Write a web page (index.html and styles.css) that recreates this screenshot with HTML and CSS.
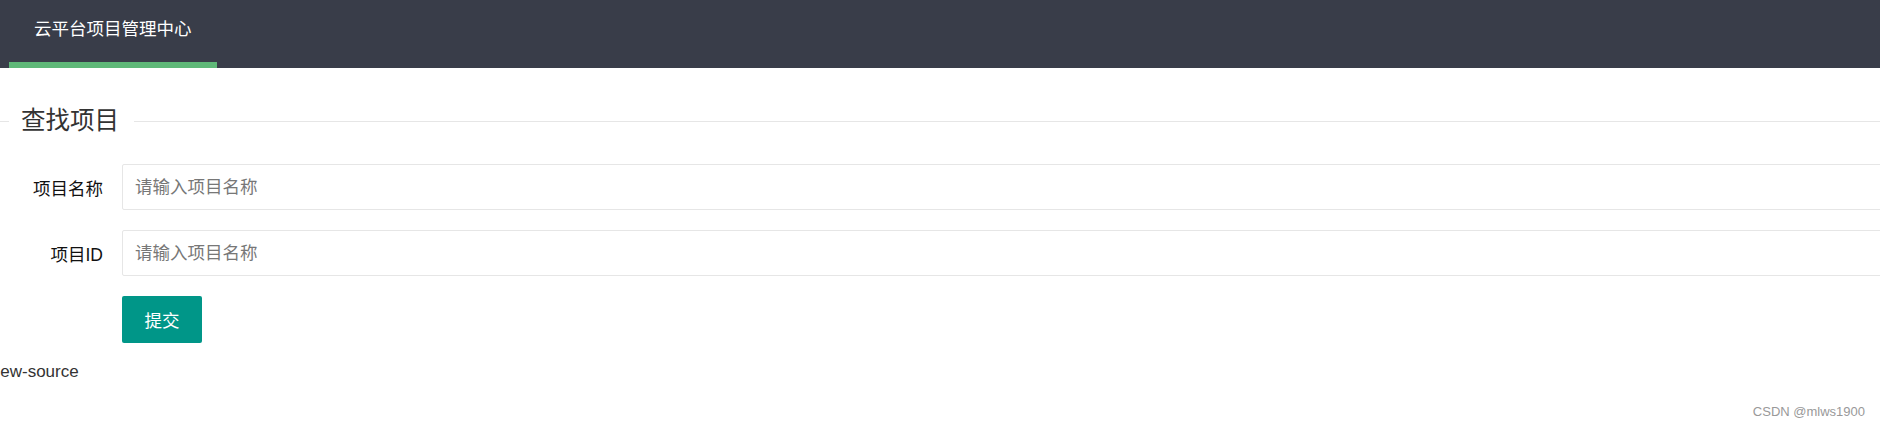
FILE: index.html
```html
<!DOCTYPE html>
<html lang="zh-CN">
<head>
    <meta charset="UTF-8">
    <meta name="viewport" content="width=device-width, initial-scale=1.0">
    <title>云平台项目管理中心</title>
    <link rel="stylesheet" href="styles.css">
</head>
<body>
    <!-- 顶部导航 -->
    <div class="header">
        <ul class="nav">
            <li class="nav-item active">云平台项目管理中心</li>
        </ul>
    </div>

    <!-- 查找项目 -->
    <div class="field-title">
        <span class="field-line field-line-left"></span>
        <span class="field-legend">查找项目</span>
        <span class="field-line"></span>
    </div>

    <form class="search-form" onsubmit="return false;">
        <div class="form-item">
            <label class="form-label">项目名称</label>
            <div class="input-block">
                <input type="text" class="form-input" placeholder="请输入项目名称">
            </div>
        </div>
        <div class="form-item">
            <label class="form-label">项目ID</label>
            <div class="input-block">
                <input type="text" class="form-input" placeholder="请输入项目名称">
            </div>
        </div>
        <div class="form-item">
            <div class="form-label"></div>
            <button class="btn" type="submit">提交</button>
        </div>
    </form>

    <div class="source-line">view-source</div>

    <div class="watermark">CSDN @mlws1900</div>
</body>
</html>
```

FILE: styles.css
```css
html,
body {
    margin: 0;
    padding: 0;
}

body {
    position: relative;
    width: 1880px;
    height: 427px;
    overflow: hidden;
    background-color: #fff;
    color: #333;
    font-family: "Liberation Sans", "Noto Sans CJK SC", sans-serif;
    font-size: 17.5px;
}

/* 顶部导航 */
.header {
    height: 68px;
    padding-left: 9px;
    background-color: #393D49;
}

.nav {
    display: flex;
    height: 100%;
    margin: 0;
    padding: 0;
    list-style: none;
}

.nav-item {
    position: relative;
    padding: 0 25px;
    line-height: 60px;
    color: #fff;
    font-size: 17.5px;
}

.nav-item.active {
    border-bottom: 6px solid #5FB878;
    line-height: 58px;
    height: 62px;
}

/* 分组标题 */
.field-title {
    display: flex;
    align-items: center;
    height: 30px;
    margin-top: 38px;
}

.field-line {
    flex: 1;
    height: 1px;
    background-color: #e6e6e6;
}

.field-line-left {
    flex: none;
    width: 9px;
}

.field-legend {
    padding: 0 15px 0 12px;
    font-size: 24.5px;
    line-height: 30px;
    color: #333;
}

/* 表单 */
.search-form {
    display: flex;
    flex-direction: column;
    gap: 20px;
    margin-top: 28px;
}

.form-item {
    display: flex;
    align-items: center;
    height: 46px;
}

.form-item:last-child {
    height: 47px;
}

.form-label {
    width: 103px;
    padding-right: 19px;
    text-align: right;
    color: #111;
}

.input-block {
    flex: 1;
    margin-right: -30px;
}

.form-input {
    box-sizing: border-box;
    width: 100%;
    height: 46px;
    padding: 0 12px;
    border: 1px solid #e6e6e6;
    border-radius: 2px;
    background-color: #fff;
    font-family: inherit;
    font-size: 17.5px;
    color: #333;
    outline: none;
}

.form-input::placeholder {
    color: #777;
}

.btn {
    width: 80px;
    height: 47px;
    padding: 0;
    border: none;
    border-radius: 2px;
    background-color: #009688;
    color: #fff;
    font-family: inherit;
    font-size: 17.5px;
    cursor: pointer;
}

.source-line {
    margin-top: 19px;
    margin-left: -12px;
    line-height: 20px;
    font-size: 17px;
    color: #333;
}

/* 水印 */
.watermark {
    position: absolute;
    right: 15px;
    bottom: 8px;
    font-size: 13px;
    line-height: 14px;
    color: #999;
}
```
